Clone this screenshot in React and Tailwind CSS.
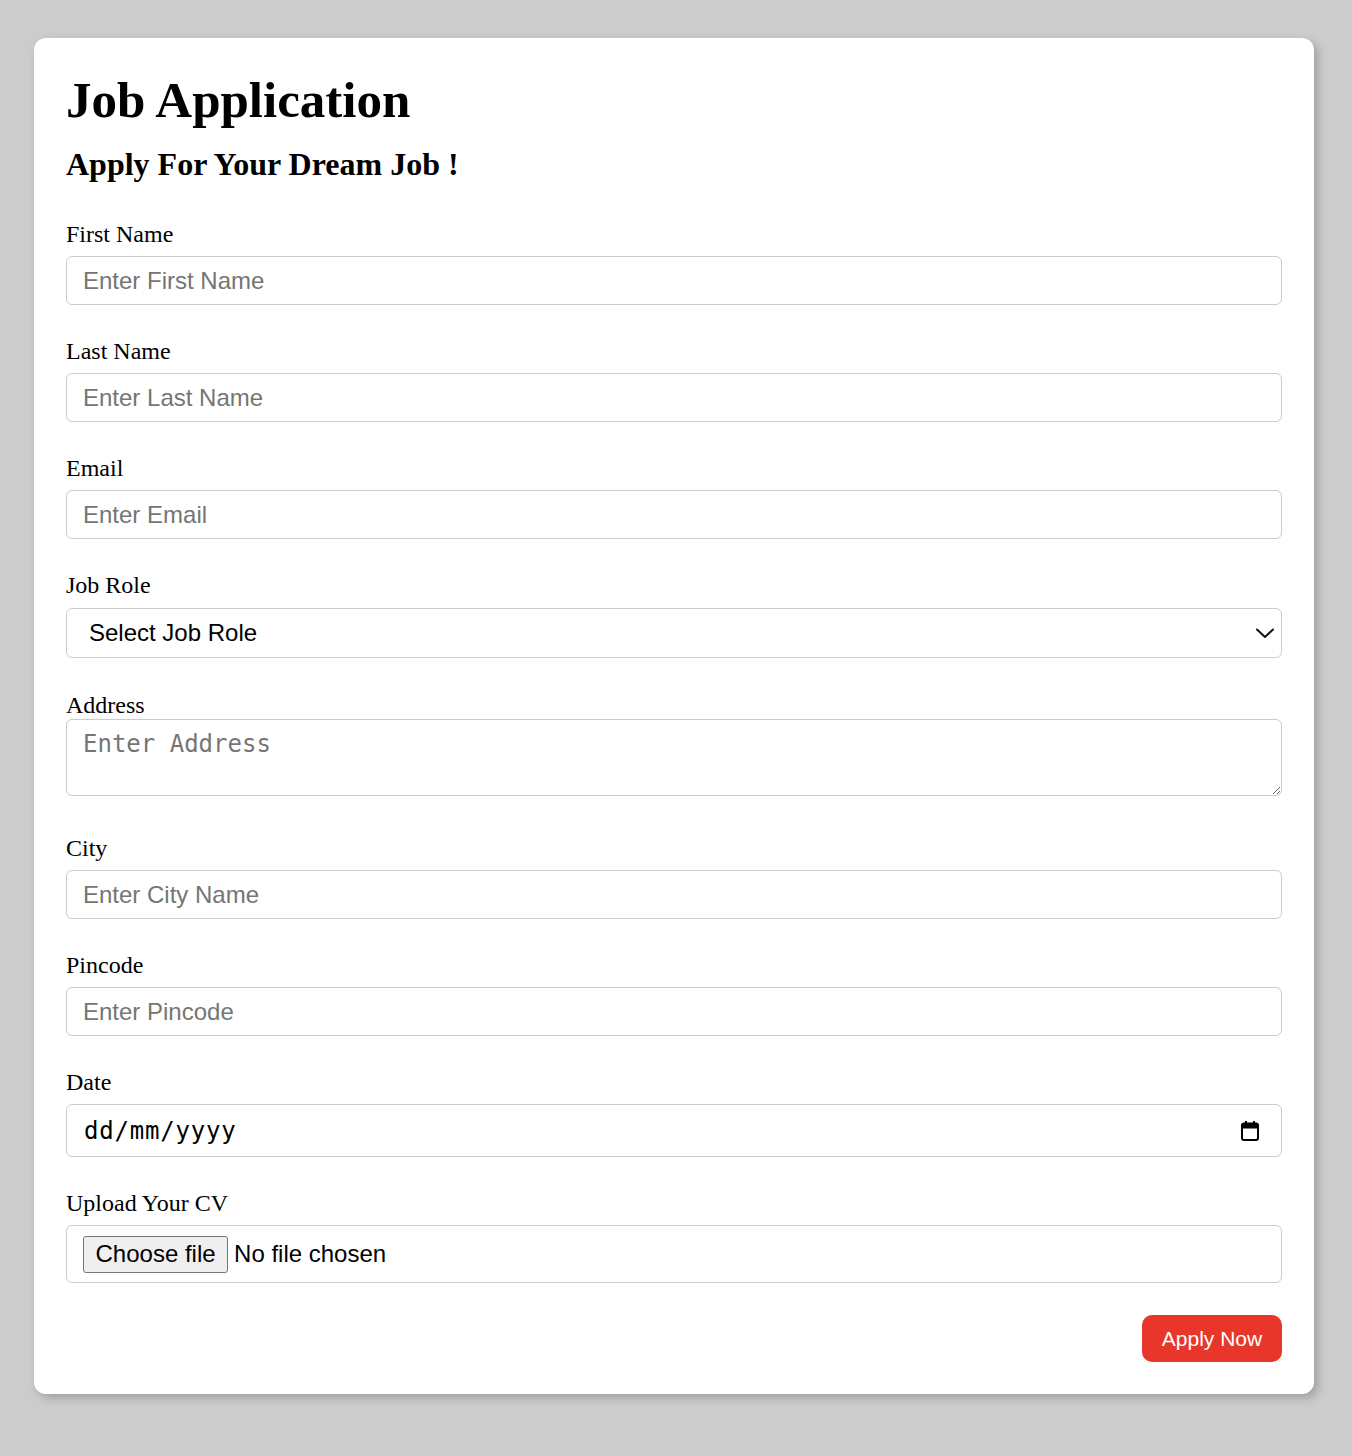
import React from "react";

const serif = "font-['Liberation_Serif','Times_New_Roman',serif]";
const sans = "font-['Liberation_Sans',Arial,sans-serif]";
const mono = "font-['DejaVu_Sans_Mono','Liberation_Mono',monospace]";

function Label({ children, className = "" }) {
  return (
    <div className={`${serif} text-[24px] leading-[27px] text-black ${className}`}>{children}</div>
  );
}

function TextField({ label, placeholder, first }) {
  return (
    <div className={first ? "" : "mt-[33px]"}>
      <Label>{label}</Label>
      <input
        type="text"
        placeholder={placeholder}
        className={`${sans} mt-[8px] block w-full h-[49px] rounded-[6px] border border-[#cccccc] bg-white px-[16px] text-[24px] text-black placeholder:text-[#757575] outline-none`}
      />
    </div>
  );
}

export default function App() {
  return (
    <div className="min-h-[1456px] w-full bg-[#cccccc] pt-[38px] pl-[34px] pr-[38px]">
      <div className="w-[1280px] rounded-[12px] bg-white px-[32px] pt-[34px] pb-[32px] shadow-[4px_4px_10px_rgba(0,0,0,0.22)]">
        <h1 className={`${serif} text-[51px] leading-[56px] font-bold text-black`}>Job Application</h1>
        <h2 className={`${serif} mt-[18px] text-[32px] leading-[37px] font-bold text-black`}>Apply For Your Dream Job !</h2>

        <div className="mt-[38px]">
          <TextField first label="First Name" placeholder="Enter First Name" />
          <TextField label="Last Name" placeholder="Enter Last Name" />
          <TextField label="Email" placeholder="Enter Email" />

          <div className="mt-[33px]">
            <Label>Job Role</Label>
            <div className={`${sans} mt-[9px] flex h-[50px] w-full items-center justify-between rounded-[6px] border border-[#cccccc] bg-white pl-[22px] pr-[7px] text-[24px] text-black`}>
              <span>Select Job Role</span>
              <svg width="18" height="11" viewBox="0 0 18 11" fill="none">
                <path d="M1 1.5 L9 9 L17 1.5" stroke="#111" strokeWidth="2" strokeLinecap="round" strokeLinejoin="round" />
              </svg>
            </div>
          </div>

          <div className="mt-[34px]">
            <Label>Address</Label>
            <textarea
              placeholder="Enter Address"
              className={`${mono} block h-[77px] w-full rounded-[6px] border border-[#cccccc] bg-white px-[16px] pt-[10px] text-[24px] leading-[28px] text-black placeholder:text-[#757575] outline-none`}
            />
          </div>

          <div className="mt-[39px]">
            <Label>City</Label>
            <input
              type="text"
              placeholder="Enter City Name"
              className={`${sans} mt-[8px] block w-full h-[49px] rounded-[6px] border border-[#cccccc] bg-white px-[16px] text-[24px] text-black placeholder:text-[#757575] outline-none`}
            />
          </div>
          <TextField label="Pincode" placeholder="Enter Pincode" />

          <div className="mt-[33px]">
            <Label>Date</Label>
            <div className="mt-[8px] flex h-[53px] w-full items-center justify-between rounded-[6px] border border-[#cccccc] bg-white pl-[17px] pr-[21px]">
              <span className={`${mono} text-[24px] tracking-[0.8px] text-black`}>dd/mm/yyyy</span>
              <svg width="20" height="22" viewBox="0 0 20 22" fill="none">
                <rect x="2" y="3.5" width="16" height="16.5" rx="2" stroke="#000" strokeWidth="2" fill="none" />
                <rect x="2" y="3.5" width="16" height="5" fill="#000" />
                <rect x="5" y="1" width="2" height="4" fill="#000" />
                <rect x="13" y="1" width="2" height="4" fill="#000" />
              </svg>
            </div>
          </div>

          <div className="mt-[33px]">
            <Label>Upload Your CV</Label>
            <div className={`${sans} mt-[8px] flex h-[58px] w-full items-center rounded-[6px] border border-[#cccccc] bg-white pl-[16px] text-[24px] text-black`}>
              <span className="flex h-[37px] items-center rounded-[3px] border border-[#767676] bg-[#efefef] px-[11.5px]">Choose file</span>
              <span className="ml-[6px]">No file chosen</span>
            </div>
          </div>
        </div>

        <div className="mt-[32px] flex justify-end">
          <button className={`${sans} h-[47px] w-[140px] rounded-[10px] bg-[#e8372a] text-[21px] text-white`}>Apply Now</button>
        </div>
      </div>
    </div>
  );
}
